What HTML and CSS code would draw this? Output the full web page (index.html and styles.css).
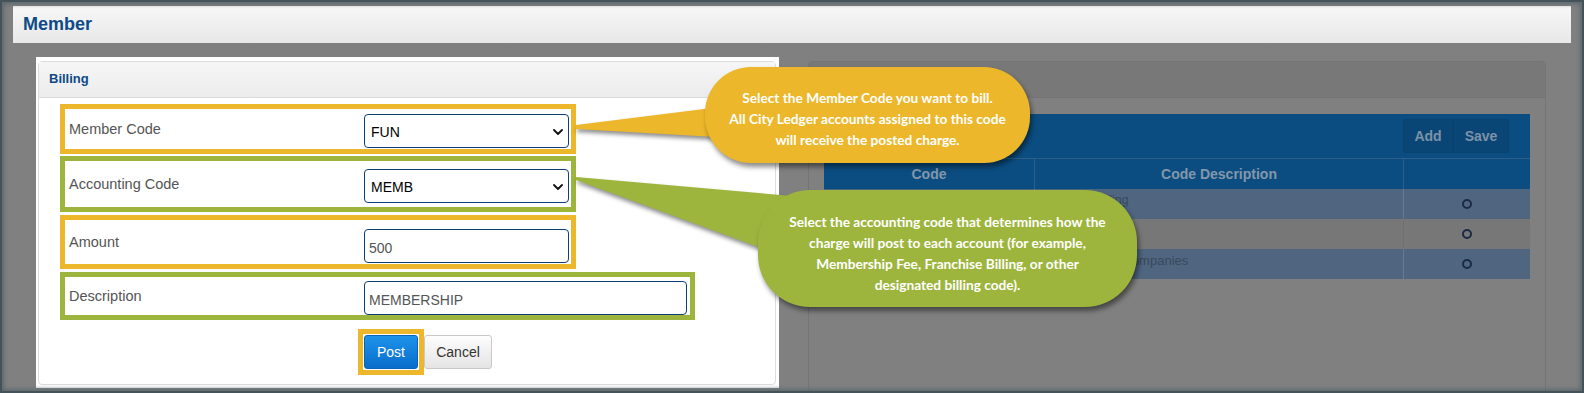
FILE: index.html
```html
<!DOCTYPE html>
<html lang="en">
<head>
  <meta charset="UTF-8" />
  <title>Member - Billing</title>
  <link rel="stylesheet" href="styles.css">
</head>
<body>
  <div class="screen">
    <header class="page-head">
      <h1>Member</h1>
    </header>

    <div class="content">
      <section class="modal">
        <div class="panel">
          <div class="panel-head">Billing</div>
          <div class="panel-body">
            <div class="field hl-yellow f-member">
              <label>Member Code</label>
              <div class="select-wrap">
                <select><option>FUN</option></select>
                <svg class="chev" width="10" height="6" viewBox="0 0 10 6"><path d="M1 1l4 4 4-4" fill="none" stroke="#111" stroke-width="1.8" stroke-linecap="round" stroke-linejoin="round"/></svg>
              </div>
            </div>
            <div class="field hl-green f-account">
              <label>Accounting Code</label>
              <div class="select-wrap">
                <select><option>MEMB</option></select>
                <svg class="chev" width="10" height="6" viewBox="0 0 10 6"><path d="M1 1l4 4 4-4" fill="none" stroke="#111" stroke-width="1.8" stroke-linecap="round" stroke-linejoin="round"/></svg>
              </div>
            </div>
            <div class="field hl-yellow f-amount">
              <label>Amount</label>
              <input type="text" class="txt" value="500">
            </div>
            <div class="field hl-green f-desc">
              <label>Description</label>
              <input type="text" class="txt txt-wide" value="MEMBERSHIP">
            </div>
            <div class="actions">
              <span class="hl-btn"><button class="btn-post">Post</button></span>
              <button class="btn-cancel">Cancel</button>
            </div>
          </div>
        </div>
      </section>

      <section class="bg-card">
        <div class="bg-card-head"></div>
        <div class="bg-card-body">
          <div class="toolbar">
            <button>Add</button><button>Save</button>
          </div>
          <table class="codes">
            <thead>
              <tr><th class="c-code">Code</th><th class="c-desc">Code Description</th><th class="c-act"></th></tr>
            </thead>
            <tbody>
              <tr class="blue"><td></td><td>Franchise Billing</td><td class="c-act"><span class="rm"></span></td></tr>
              <tr class="grey"><td></td><td></td><td class="c-act"><span class="rm"></span></td></tr>
              <tr class="blue"><td></td><td>Management Companies</td><td class="c-act"><span class="rm"></span></td></tr>
            </tbody>
          </table>
        </div>
      </section>
    </div>

    <!-- callout tails -->
    <svg class="tails" width="1584" height="393" viewBox="0 0 1584 393">
      <polygon class="tail" points="576,125 712,108 716,137 576,129" fill="#ecb72b"/>
      <polygon class="tail" points="576,177 792,196 772,252 576,180" fill="#9db53d"/>
    </svg>

    <div class="bubble bubble-yellow">
      Select the Member Code you want to bill.<br>
      All City Ledger accounts assigned to this code<br>
      will receive the posted charge.
    </div>
    <div class="bubble bubble-green">
      Select the accounting code that determines how the<br>
      charge will post to each account (for example,<br>
      Membership Fee, Franchise Billing, or other<br>
      designated billing code).
    </div>
  </div>
</body>
</html>
```

FILE: styles.css
```css
html, body {
  margin: 0;
  padding: 0;
}
body {
  width: 1584px;
  height: 393px;
  overflow: hidden;
  background: #808080;
  font-family: 'Liberation Sans', Arial, sans-serif;
}
.screen {
  position: relative;
  width: 1584px;
  height: 393px;
  overflow: hidden;
}
.screen::after {
  content: '';
  position: absolute;
  inset: 0;
  box-shadow: inset 0 0 0 2px #44525a, inset 0 0 4px 4px #5d686e;
  pointer-events: none;
}

/* page header */
.page-head {
  margin: 6px 13px 0;
  height: 37px;
  background: linear-gradient(#f7f7f7, #e8e8e8);
}
.page-head h1 {
  margin: 0;
  padding-left: 10px;
  line-height: 37px;
  font-size: 18px;
  font-weight: 700;
  color: #0d4a87;
}

.content {
  display: flex;
  align-items: flex-start;
  padding: 14px 0 0 36px;
}

/* billing modal */
.modal {
  width: 743px;
  box-sizing: border-box;
  padding: 4px 3px 3px 2px;
  background: #fff;
}
.panel {
  height: 324px;
  box-sizing: border-box;
  border: 1px solid #dcdcdc;
  border-radius: 4px;
}
.panel-head {
  height: 35px;
  line-height: 33px;
  padding-left: 10px;
  border-bottom: 1px solid #dcdcdc;
  background: linear-gradient(#f6f6f6, #ececec);
  font-size: 13px;
  font-weight: 700;
  color: #0d4a87;
}
.panel-body {
  padding: 6px 0 0 21px;
}
.field {
  display: flex;
  align-items: center;
  box-sizing: border-box;
  width: 516px;
  border: 5px solid;
  background: #fff;
}
.field label {
  width: 299px;
  padding-left: 4px;
  box-sizing: border-box;
  font-size: 14.5px;
  color: #555;
}
.hl-yellow { border-color: #ecb72b; }
.hl-green { border-color: #9db53d; }
.f-member { height: 50px; }
.f-account { height: 56px; margin-top: 2px; }
.f-amount { height: 54px; margin-top: 3px; }
.f-desc { height: 48px; margin-top: 3px; width: 635px; }

.select-wrap {
  position: relative;
  width: 205px;
  height: 34px;
  margin-top: 4px;
}
.select-wrap select {
  appearance: none;
  width: 100%;
  height: 100%;
  box-sizing: border-box;
  border: 1px solid #0f3f7a;
  border-radius: 4px;
  background: #fff;
  padding: 2px 6px 0;
  font-family: 'Liberation Sans', Arial, sans-serif;
  font-size: 14px;
  color: #000;
}
.chev {
  position: absolute;
  right: 6px;
  top: 15px;
}
.txt {
  width: 205px;
  height: 34px;
  box-sizing: border-box;
  border: 1px solid #0f3f7a;
  border-radius: 4px;
  padding: 3px 4px 0;
  font-family: 'Liberation Sans', Arial, sans-serif;
  font-size: 14px;
  color: #555;
}
.txt-wide {
  width: 323px;
  margin-top: 4px;
}
.f-amount .txt {
  margin-top: 8px;
}

.actions {
  display: flex;
  align-items: center;
  margin: 9px 0 0 298px;
}
.hl-btn {
  display: inline-block;
  border: 5px solid #ecb72b;
  padding: 1px;
  background: #fff;
}
.btn-post, .btn-cancel {
  display: block;
  height: 34px;
  border-radius: 3px;
  font-family: 'Liberation Sans', Arial, sans-serif;
  font-size: 14px;
  cursor: pointer;
}
.btn-post {
  width: 54px;
  border: 1px solid #0b63b8;
  background: linear-gradient(#1d93ea, #0a6dcb);
  color: #fff;
}
.btn-cancel {
  width: 68px;
  border: 1px solid #c8c8c8;
  background: linear-gradient(#fdfdfd, #e4e4e4);
  color: #333;
}

/* dimmed page behind */
.bg-card {
  width: 738px;
  height: 340px;
  margin: 4px 0 0 29px;
  box-sizing: border-box;
  border: 1px solid #747474;
  border-radius: 4px 4px 0 0;
}
.bg-card-head {
  height: 35px;
  background: #787878;
  border-bottom: 1px solid #747474;
}
.bg-card-body {
  padding: 16px 15px 0 15px;
}
.toolbar {
  display: flex;
  justify-content: flex-end;
  align-items: center;
  height: 44px;
  padding-right: 21px;
  background: #0b4d80;
}
.toolbar button {
  height: 34px;
  padding: 0 9px;
  border: 1px solid #09436f;
  background: #0a4675;
  color: #7c92a8;
  font-family: 'Liberation Sans', Arial, sans-serif;
  font-size: 14px;
  font-weight: 700;
}
.toolbar button:first-child {
  width: 50px;
  border-radius: 3px 0 0 3px;
}
.toolbar button:last-child {
  width: 56px;
  border-radius: 0 3px 3px 0;
}
.codes {
  width: 706px;
  border-collapse: collapse;
  table-layout: fixed;
}
.codes th {
  height: 30px;
  padding: 0;
  background: #0b4d80;
  border-top: 1px solid #2f5f88;
  border-left: 1px solid #2f5f88;
  color: #8397ab;
  font-size: 14px;
  font-weight: 700;
}
.codes th:first-child { border-left: none; }
.c-code { width: 210px; }
.c-desc { width: 368px; }
.codes td {
  height: 30px;
  box-sizing: border-box;
  padding: 4px 8px 0;
  vertical-align: top;
  font-size: 13px;
  color: #3a4a5d;
  border-left: 1px solid #6b7a8c;
}
.codes td:first-child { border-left: none; }
.codes tr:first-child td:nth-child(2) { font-size: 12.5px; padding-left: 2px; }
.codes tr.blue td { background: #4f6580; }
.codes tr.grey td { background: #777; border-left-color: #707070; }
.codes td.c-act {
  text-align: center;
  vertical-align: middle;
  padding: 0;
}
.rm {
  display: inline-block;
  width: 6px;
  height: 6px;
  border: 2px solid #1b2b44;
  border-radius: 50%;
  margin: 2px 0 0 0;
}

/* callouts */
.tails {
  position: absolute;
  top: 0;
  left: 0;
  pointer-events: none;
}
.tail {
  filter: drop-shadow(1px 3px 2px rgba(0, 0, 0, 0.45));
}
.bubble {
  position: absolute;
  box-sizing: border-box;
  text-align: center;
  color: #fff;
  font-family: Lato, 'Open Sans', sans-serif;
  font-size: 13.7px;
  font-weight: 700;
  line-height: 21px;
  box-shadow: 2px 4px 5px rgba(0, 0, 0, 0.45);
}
.bubble-yellow {
  left: 705px;
  top: 67px;
  width: 325px;
  height: 96px;
  padding-top: 20px;
  border-radius: 46px;
  background: #ecb72b;
}
.bubble-green {
  left: 758px;
  top: 190px;
  width: 379px;
  height: 117px;
  padding-top: 21px;
  border-radius: 52px;
  background: #9db53d;
}
```
